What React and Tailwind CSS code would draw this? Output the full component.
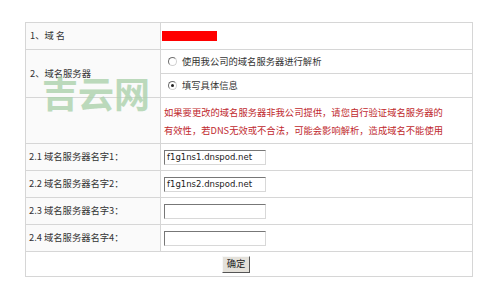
import React from "react";

const font = { fontFamily: '"Noto Sans CJK SC", "Noto Sans", sans-serif' };

function Radio({ checked }) {
  return (
    <span className="relative inline-block w-[9px] h-[9px] rounded-full border border-t-[#6f6f6f] border-l-[#6f6f6f] border-b-[#d0d0d0] border-r-[#d0d0d0] bg-white shrink-0">
      {checked && (
        <span className="absolute left-[2px] top-[2px] w-[3px] h-[3px] rounded-full bg-[#222]" />
      )}
    </span>
  );
}

function Input({ value }) {
  return (
    <div className="w-[102px] h-[15px] border border-t-[#777] border-l-[#777] border-b-[#d8d8d8] border-r-[#d8d8d8] bg-white flex items-center pl-[2px] text-[8.5px] text-[#222] leading-none" style={{ fontFamily: '"DejaVu Sans", sans-serif' }}>
      {value}
    </div>
  );
}

function NameRow({ label, value }) {
  return (
    <div className="flex h-[27px] border-b border-[#d6d6d6]">
      <div className="w-[135px] shrink-0 border-r border-[#d6d6d6] bg-[#fafafa] flex items-center pl-[3px] text-[#333]">
        {label}
      </div>
      <div className="flex-1 flex items-center pl-[3px]">
        <Input value={value} />
      </div>
    </div>
  );
}

export default function App() {
  return (
    <div className="relative w-[500px] h-[291px] bg-white overflow-hidden text-[9.3px] leading-none" style={font}>
      <div className="ml-[25px] mt-[22px] w-[448px] border border-[#d6d6d6]">
        <div className="flex h-[27px] border-b border-[#d6d6d6]">
          <div className="w-[135px] shrink-0 border-r border-[#d6d6d6] bg-[#fafafa] flex items-center pl-[4px] text-[#333]">
            1、域&nbsp;名
          </div>
          <div className="flex-1 flex items-center pl-[1px]">
            <div className="w-[55px] h-[10px] bg-[#ff0000]" />
          </div>
        </div>
        <div className="flex h-[48px] border-b border-[#d6d6d6]">
          <div className="w-[135px] shrink-0 border-r border-[#d6d6d6] bg-[#fafafa] flex items-center pl-[4px] text-[#333]">
            2、域名服务器
          </div>
          <div className="flex-1 flex flex-col">
            <div className="h-[24px] border-b border-[#d6d6d6] flex items-center pl-[7px] gap-[5px] text-[#333]">
              <Radio />
              <span>使用我公司的域名服务器进行解析</span>
            </div>
            <div className="flex-1 flex items-center pl-[7px] gap-[5px] text-[#333]">
              <Radio checked />
              <span>填写具体信息</span>
            </div>
          </div>
        </div>
        <div className="flex h-[46px] border-b border-[#d6d6d6]">
          <div className="w-[135px] shrink-0 border-r border-[#d6d6d6] bg-[#fafafa]" />
          <div className="flex-1 flex flex-col justify-center pl-[3px] text-[#c0282d] leading-[18px]">
            <div>如果要更改的域名服务器非我公司提供，请您自行验证域名服务器的</div>
            <div>有效性，若DNS无效或不合法，可能会影响解析，造成域名不能使用</div>
          </div>
        </div>
        <NameRow label="2.1 域名服务器名字1：" value="f1g1ns1.dnspod.net" />
        <NameRow label="2.2 域名服务器名字2：" value="f1g1ns2.dnspod.net" />
        <NameRow label="2.3 域名服务器名字3：" value="" />
        <NameRow label="2.4 域名服务器名字4：" value="" />
        <div className="h-[24px] flex items-center pl-[196px]">
          <button className="w-[28px] h-[17px] bg-[#e4e1da] border border-t-[#f8f8f8] border-l-[#f8f8f8] border-b-[#555] border-r-[#555] text-[9.3px] text-[#222] leading-none flex items-center justify-center" style={font}>
            确定
          </button>
        </div>
      </div>
      <div className="absolute left-[42px] top-[74px] text-[36px] font-bold leading-none text-[#acd2ac] opacity-80 tracking-[0px] pointer-events-none" style={font}>
        吉云网
      </div>
    </div>
  );
}
